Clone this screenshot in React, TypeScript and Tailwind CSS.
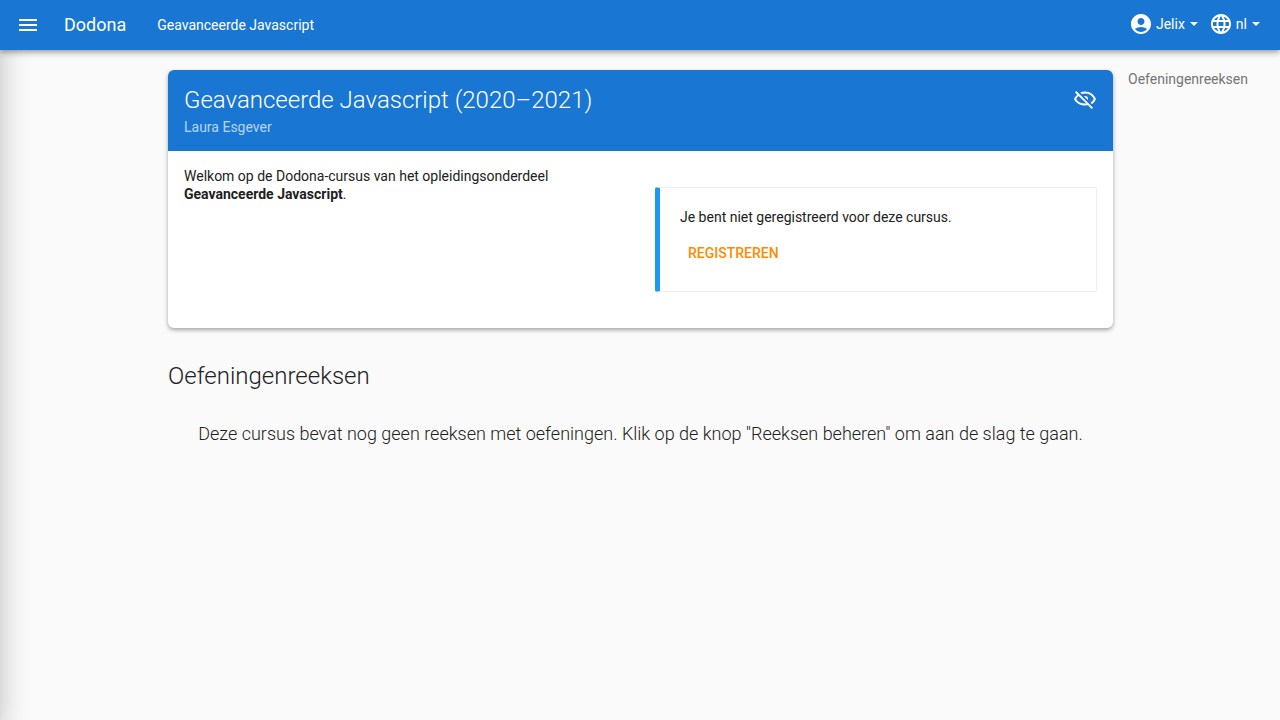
import { MdMenu, MdAccountCircle, MdLanguage } from "react-icons/md";

function EyeOff() {
  return (
    <svg viewBox="0 0 24 24" className="size-6" fill="currentColor" aria-hidden="true">
      <path d="M2 5.27L3.28 4 20 20.72 18.73 22l-3.65-3.65c-1 .1-2.04.15-3.08.15-5 0-9.27-2.61-11-6.5.69-1.66 1.79-3.01 3.19-4.04L2 5.27M12 9a3 3 0 0 1 3 3 3 3 0 0 1-.17 1L11 9.17A3 3 0 0 1 12 9m0-4.5c5 0 9.27 3.11 11 7.5a11.79 11.79 0 0 1-4 5.19l-1.42-1.43A9.862 9.862 0 0 0 20.82 12 9.821 9.821 0 0 0 12 6.5c-1.09 0-2.16.18-3.16.5L7.3 5.47c1.44-.62 3.03-.97 4.7-.97M3.18 12c1.6 2.9 5 4.6 8.82 4.6.5 0 .97-.03 1.4-.08L5.6 9.07c-.99.75-1.82 1.71-2.42 2.93z" />
    </svg>
  );
}

function Caret() {
  return <span aria-hidden="true" className="ml-[5px] border-x-4 border-t-4 border-x-transparent border-t-white" />;
}

export default function App() {
  return (
    <div className="flex min-h-screen flex-col overflow-x-hidden bg-[#fafafa] font-[Roboto,sans-serif] text-sm leading-[18px] text-[#212121]">
      <header className="relative z-10 flex h-[50px] items-center justify-between bg-[#1976d2] px-4 text-white shadow-[0_2px_4px_-1px_rgba(0,0,0,0.2),0_4px_5px_rgba(0,0,0,0.14),0_1px_10px_rgba(0,0,0,0.12)]">
        <nav className="flex items-center">
          <button type="button" aria-label="Menu">
            <MdMenu className="size-6" />
          </button>
          <a href="#" className="ml-6 text-lg">Dodona</a>
          <a href="#" className="ml-[31px]">Geavanceerde Javascript</a>
        </nav>
        <div className="flex items-center gap-[11px] pr-1 pb-0.5">
          <button type="button" className="flex items-center">
            <MdAccountCircle className="mr-[3px] size-6" />
            Jelix
            <Caret />
          </button>
          <button type="button" className="flex items-center">
            <MdLanguage className="mr-[3px] size-6" />
            nl
            <Caret />
          </button>
        </div>
      </header>
      <div className="flex grow">
        <div aria-hidden="true" className="-mt-5 -ml-6 w-6 shrink-0 shadow-[0_8px_10px_-5px_rgba(0,0,0,0.1),0_10px_24px_2px_rgba(0,0,0,0.1),0_6px_30px_5px_rgba(0,0,0,0.1)]" />
        <main className="ml-[168px] min-w-0 grow pt-5">
          <section className="overflow-hidden rounded-md bg-white shadow-[0_2px_4px_rgba(0,0,0,0.35)]">
            <div className="flex justify-between bg-[#1976d2] px-4 pt-4 pb-[15px] text-white">
              <div>
                <h1 className="text-2xl leading-7 font-light">Geavanceerde Javascript (2020–2021)</h1>
                <p className="mt-1 text-white/70">Laura Esgever</p>
              </div>
              <span title="Verborgen" className="pt-px"><EyeOff /></span>
            </div>
            <div className="grid grid-cols-2 gap-[29px] p-4">
              <p>
                Welkom op de Dodona-cursus van het opleidingsonderdeel <strong className="font-bold">Geavanceerde Javascript</strong>.
              </p>
              <div className="my-5 rounded-xs border border-l-5 border-[#eeeeee] border-l-[#2196f3] p-5">
                <p>Je bent niet geregistreerd voor deze cursus.</p>
                <button type="button" className="mt-[9px] h-9 px-2 font-medium text-[#fb8c00] uppercase">Registreren</button>
              </div>
            </div>
          </section>
          <h2 id="oefeningenreeksen" className="mt-8 text-2xl leading-8 font-light">Oefeningenreeksen</h2>
          <p className="mt-[30px] text-center text-lg leading-6 font-light">
            Deze cursus bevat nog geen reeksen met oefeningen. Klik op de knop "Reeksen beheren" om aan de slag te gaan.
          </p>
        </main>
        <aside className="w-[167px] shrink-0 pt-5 pl-[15px]">
          <a href="#oefeningenreeksen" className="text-[#757575]">Oefeningenreeksen</a>
        </aside>
      </div>
    </div>
  );
}
